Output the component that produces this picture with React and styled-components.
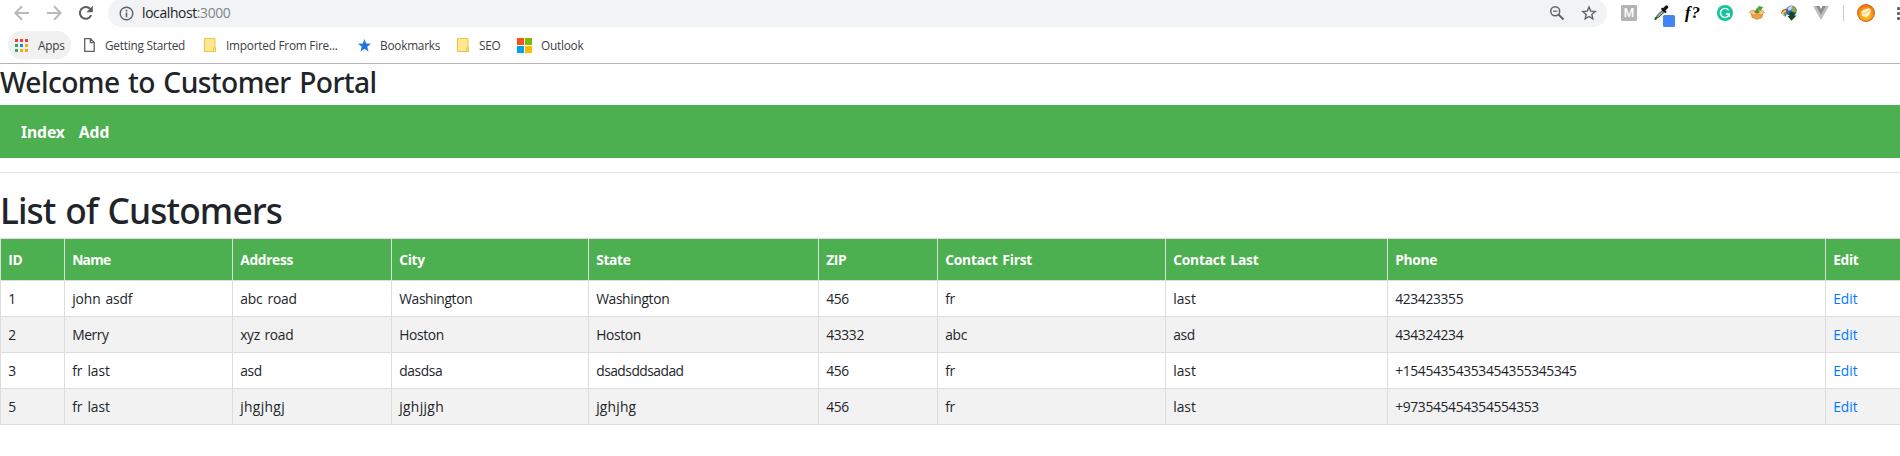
import React from 'react';
import styled, { createGlobalStyle } from 'styled-components';

const UI_FONT = '"Noto Sans", "Open Sans", sans-serif';
const GREEN = '#4caf50';

const GlobalStyle = createGlobalStyle`
  * { box-sizing: border-box; }
  body { margin: 0; background: #fff; overflow: hidden; font-family: ${UI_FONT}; }
  svg { display: block; flex: none; }
`;

const Window = styled.div`
  width: 1900px;
  height: 456px;
  overflow: hidden;
`;

/* Browser chrome */

const Chrome = styled.header`
  height: 64px;
  border-bottom: 1px solid #b6b4b6;
`;

const Toolbar = styled.div`
  height: 26px;
  display: flex;
  align-items: center;
`;

const NavButtons = styled.div`
  display: flex;
  gap: 16px;
  padding: 0 14px;
`;

const Omnibox = styled.div`
  width: 1499px;
  height: 28px;
  flex: none;
  padding: 0 11px;
  display: flex;
  align-items: center;
  border-radius: 14px;
  background: #f1f3f4;
`;

const Url = styled.div`
  flex: 1;
  margin-left: 8px;
  font: 13.8px/20px "Open Sans", sans-serif;
  letter-spacing: -0.33px;
  color: #202124;
`;

const Port = styled.span`
  color: #80868b;
`;

const OmniboxActions = styled.div`
  display: flex;
  gap: 16px;
  margin-right: -1px;
`;

const Extensions = styled.div`
  display: flex;
  flex: none;
  align-items: center;
  gap: 16px;
  margin-left: 14px;
`;

const LetterBadge = styled.div`
  width: 16px;
  height: 16px;
  border-radius: 1px;
  background: #b4b4b4;
  color: #fff;
  font: 500 12px/16px Roboto, sans-serif;
  text-align: center;
`;

const FontFinder = styled.div`
  width: 16px;
  display: flex;
  justify-content: center;
  white-space: nowrap;
  color: #000;
  font: italic bold 17px/20px "Liberation Serif", serif;
  letter-spacing: 0.8px;
`;

const Divider = styled.div`
  width: 1px;
  height: 16px;
  flex: none;
  margin: 0 13px 0 14px;
  background: #c8c8c8;
`;

const Menu = styled.div`
  display: flex;
  flex: none;
  flex-direction: column;
  gap: 2px;
  margin-left: 22px;
`;

const MenuDot = styled.i`
  width: 3px;
  height: 3px;
  border-radius: 1px;
  background: #5f6368;
`;

const BookmarksBar = styled.nav`
  height: 37px;
  padding: 1px 8px 0;
  display: flex;
  align-items: center;
`;

const Bookmark = styled.div`
  height: 28px;
  display: flex;
  align-items: center;
  gap: ${(p) => p.$gap}px;
  width: ${(p) => p.$width}px;
  margin-right: ${(p) => (p.$active ? 6 : 0)}px;
  padding-left: 7px;
  border-radius: 14px;
  background: ${(p) => (p.$active ? '#f1f1f1' : 'transparent')};
  color: #3c4043;
  font: 11.8px/16px "Open Sans", sans-serif;
  letter-spacing: -0.22px;
  white-space: nowrap;
`;

/* Page */

const PageTitle = styled.h2`
  margin: 0;
  height: 41px;
  font: 500 28.2px/37px ${UI_FONT};
  letter-spacing: -0.6px;
  word-spacing: 1.8px;
  color: #212529;
`;

const NavBar = styled.nav`
  height: 53px;
  padding-left: 21px;
  display: flex;
  align-items: center;
  gap: 14px;
  background: ${GREEN};
`;

const NavLink = styled.a`
  color: #fff;
  font: bold 15.7px/22px ${UI_FONT};
  letter-spacing: -0.1px;
`;

const Rule = styled.hr`
  margin: 14px 0 13px;
  border: 0;
  border-top: 1px solid #e6e6e6;
`;

const ListTitle = styled.h1`
  margin: 0;
  height: 52px;
  font: 500 35.3px/48px ${UI_FONT};
  letter-spacing: -0.9px;
  word-spacing: 1.6px;
  color: #212529;
`;

const Table = styled.table`
  width: 1900px;
  table-layout: fixed;
  border-collapse: separate;
  border-spacing: 0;
  border-bottom: 1px solid #ddd;
  font: 13.8px/20px "Open Sans", sans-serif;
  color: #212529;
`;

const Row = styled.tr`
  height: 36px;
  background: ${(p) => (p.$striped ? '#f2f2f2' : '#fff')};
`;

const HeaderRow = styled.tr`
  height: 42px;
  background: ${GREEN};
  color: #fff;
`;

const Cell = styled.td`
  padding: 1px 0 0 7.2px;
  border: solid #ddd;
  border-width: 1px 0 0 1px;
  letter-spacing: ${(p) => p.$tracking ?? -0.33}px;
  word-spacing: 1.5px;
  text-align: left;
  white-space: nowrap;
`;

const EditLink = styled.a`
  color: #007bff;
`;

const Col = styled.col`
  width: ${(p) => p.$width}px;
`;

/* Icons */

const ArrowIcon = ({ forward }) => (
  <svg width="16" height="16" viewBox="0 0 16 16" fill="none" stroke="#bababc" strokeWidth="2">
    <path d={forward ? 'M1 8h13M8 1.3 14.6 8 8 14.7' : 'M15 8H2M8 1.3 1.4 8 8 14.7'} />
  </svg>
);

const ReloadIcon = () => (
  <svg width="16" height="16" viewBox="0 0 16 16">
    <path d="M13.2 10.2A5.9 5.9 0 1 1 12.2 3.9" fill="none" stroke="#5a5d61" strokeWidth="2" />
    <path d="M14.8.8v6.5H8.4z" fill="#5a5d61" />
  </svg>
);

const InfoIcon = () => (
  <svg width="15" height="15" viewBox="0 0 15 15">
    <circle cx="7.5" cy="7.5" r="6.3" fill="none" stroke="#5f6368" strokeWidth="1.4" />
    <path d="M6.7 3.8h1.6v1.6H6.7zM6.7 6.6h1.6v4.7H6.7z" fill="#5f6368" />
  </svg>
);

const ZoomOutIcon = () => (
  <svg width="16" height="16" viewBox="0 0 16 16" fill="none" stroke="#5f6368" strokeWidth="1.5">
    <circle cx="6.2" cy="6.2" r="4.5" />
    <path d="M9.5 9.5l5 5" strokeWidth="2" />
    <path d="M4 6.2h4.4" strokeWidth="1.2" />
  </svg>
);

const StarOutlineIcon = () => (
  <svg width="16" height="16" viewBox="0 0 16 16" fill="none" stroke="#5f6368" strokeWidth="1.4">
    <path d="M8 2l1.7 4.1 4.5.4-3.4 2.9 1 4.4L8 11.5l-3.8 2.3 1-4.4L1.8 6.5l4.5-.4z" />
  </svg>
);

const EyedropperIcon = () => (
  <svg width="16" height="16" viewBox="0 0 16 16" overflow="visible">
    <path d="M3 13.5L4.5 10 10 4.8l1.8 1.8-6 5.6z" fill="#9fb5a3" stroke="#2a4a33" strokeWidth="1" />
    <path d="M2.8 12.2L2.4 15" stroke="#1d6b38" strokeWidth="1.8" />
    <path d="M8.6 3.3l4.4 4.2" stroke="#151515" strokeWidth="2" />
    <path d="M10.6 4.9l3-2.8" stroke="#151515" strokeWidth="3.4" strokeLinecap="round" />
    <rect x="10" y="10" width="12" height="12" rx="1.5" fill="#4285f4" />
  </svg>
);

const GrammarIcon = () => (
  <svg width="16" height="16" viewBox="0 0 16 16">
    <circle cx="8" cy="8" r="8" fill="#15c39a" />
    <path d="M11.6 5.3A4.5 4.5 0 1 0 12.3 9H8.8M12.3 9v2.9" fill="none" stroke="#fff" strokeWidth="1.4" />
  </svg>
);

const BasketIcon = () => (
  <svg width="16" height="16" viewBox="0 0 16 16">
    <path d="M2.2 8L8 6l5.8 2-.9 4.6L8 14.3 3 12.4z" fill="#e9a342" stroke="#b87423" strokeWidth=".6" />
    <path d="M.3 7.2L3 5.2l5 1 5-1 2.7 2-3.7 3-4-1.6-4 1.6z" fill="#f9cd80" stroke="#c07b28" strokeWidth=".6" />
    <path d="M4.5 7L8 5.8 11.5 7 8 8.2z" fill="#a05a18" />
    <path d="M6.8 7.2C6.8 4 8 2.6 10 2.4L9.8 1.2l4 1.3-2.8 3-.3-1.2C9.4 4.5 9 5.500 9.100 7.200z" fill="#41a82d" stroke="#2b7b1d" strokeWidth=".5" />
  </svg>
);

const GlobeIcon = () => (
  <svg width="16" height="16" viewBox="0 0 16 16" fill="none">
    <path d="M9 4.5H5C2 4.5.7 7 .7 8.5" stroke="#e53a2e" strokeWidth="1.3" />
    <path d="M9 5.9H5.5C3 5.9 1.8 7.5 1.8 9.5" stroke="#f6c928" strokeWidth="1.4" />
    <path d="M9 7.3H6C4 7.3 3 8.5 3 10.5" stroke="#3fae49" strokeWidth="1.5" />
    <path d="M10 8.7H6.5C5 8.7 4.3 9.5 4.3 11.5" stroke="#7452b5" strokeWidth="1.3" />
    <circle cx="10.4" cy="5.7" r="5.3" fill="#2f62a8" />
    <path d="M6.5 3.5c1-2 3.5-3 5.5-2l-1.5 3-3 1.5z" fill="#bdd6f2" />
    <path d="M12 1c2 1 3.3 3 3 5.5L12.5 8 10 5z" fill="#9aa83c" />
    <path d="M8.5 7.5c2-1 4-.5 5 0v3h2l-5 5.2L6.5 11h2z" fill="#0f4a1c" />
  </svg>
);

const VueIcon = () => (
  <svg width="16" height="16" viewBox="0 0 16 16">
    <path d="M0 1h6.2L8 4.2 9.8 1H16L8 15z" fill="#bdbdbd" />
    <path d="M3.2 1h3L8 4.2 9.8 1h3L8 9.4z" fill="#8b8b8b" />
  </svg>
);

const AvatarIcon = () => (
  <svg width="18" height="18" viewBox="0 0 18 18">
    <defs>
      <radialGradient id="avatar" cx=".5" cy=".65" r=".6">
        <stop offset="0" stopColor="#ffcb2e" />
        <stop offset=".6" stopColor="#fb9d14" />
        <stop offset="1" stopColor="#ee7712" />
      </radialGradient>
    </defs>
    <circle cx="9" cy="9" r="8.4" fill="url(#avatar)" stroke="#d9691c" strokeWidth="1.2" />
    <path d="M4.5 7.5c2-2.5 5.5-3.5 8.7-3C14.5 7 13 11.2 10 12.5c-2 .5-3.600.2-5-.8z" fill="#fff5cf" />
    <path d="M4.5 9.3c3 .8 5.5-.8 8.5-3.7" fill="none" stroke="#f9b43c" strokeWidth=".8" />
  </svg>
);

const APP_COLORS = ['#ea4335', '#ea4335', '#ea4335', '#34a853', '#1a84f0', '#f9ab00', '#34a853', '#f9ab00', '#f9ab00'];

const AppsIcon = () => (
  <svg width="13" height="13" viewBox="0 0 13 13">
    {APP_COLORS.map((color, i) => (
      <rect key={i} x={(i % 3) * 5} y={Math.floor(i / 3) * 5} width="3" height="3" fill={color} />
    ))}
  </svg>
);

const PageIcon = () => (
  <svg width="11" height="14" viewBox="0 0 11 14" fill="none" stroke="#5f6368" strokeWidth="1.3">
    <path d="M.7.7h5.8l3.7 3.8v8.8H.7zM6.3.7v4h3.9" />
  </svg>
);

const FolderIcon = () => (
  <svg width="12" height="14" viewBox="0 0 12 14">
    <path d="M.5.5h10.5v13H.5z" fill="#ffe694" stroke="#e8c53f" />
    <path d="M9.5 13.5V10h2v3.5z" fill="#ffe694" stroke="#e8c53f" />
  </svg>
);

const StarIcon = () => (
  <svg width="13" height="13" viewBox="0 0 13 13">
    <path d="M6.5 0l1.7 4.5 4.8.2-3.8 3 1.3 4.8-4-2.7-4 2.7 1.3-4.8L0 4.7l4.8-.2z" fill="#1a73e8" />
  </svg>
);

const OutlookIcon = () => (
  <svg width="15" height="15" viewBox="0 0 15 15">
    <path d="M0 0h7v7H0z" fill="#f65314" />
    <path d="M8 0h7v7H8z" fill="#7cbb00" />
    <path d="M0 8h7v7H0z" fill="#00a1f1" />
    <path d="M8 8h7v7H8z" fill="#ffbb00" />
  </svg>
);

const BOOKMARKS = [
  { label: 'Apps', icon: <AppsIcon />, width: 63, gap: 10, active: true },
  { label: 'Getting Started', icon: <PageIcon />, width: 120, gap: 10 },
  { label: 'Imported From Fire...', icon: <FolderIcon />, width: 154, gap: 10 },
  { label: 'Bookmarks', icon: <StarIcon />, width: 99, gap: 9 },
  { label: 'SEO', icon: <FolderIcon />, width: 60, gap: 10 },
  { label: 'Outlook', icon: <OutlookIcon />, width: 90, gap: 9 },
];

const COLUMNS = [
  { label: 'ID', width: 64 },
  { label: 'Name', width: 168, tracking: -0.8 },
  { label: 'Address', width: 159 },
  { label: 'City', width: 197 },
  { label: 'State', width: 230 },
  { label: 'ZIP', width: 119 },
  { label: 'Contact First', width: 228, tracking: -0.22 },
  { label: 'Contact Last', width: 222, tracking: -0.22 },
  { label: 'Phone', width: 438 },
  { label: 'Edit', width: 75 },
];

const CUSTOMERS = [
  ['1', 'john asdf', 'abc road', 'Washington', 'Washington', '456', 'fr', 'last', '423423355'],
  ['2', 'Merry', 'xyz road', 'Hoston', 'Hoston', '43332', 'abc', 'asd', '434324234'],
  ['3', 'fr last', 'asd', 'dasdsa', 'dsadsddsadad', '456', 'fr', 'last', '+15454354353454355345345'],
  ['5', 'fr last', 'jhgjhgj', 'jghjjgh', 'jghjhg', '456', 'fr', 'last', '+973545454354554353'],
];

const TRACKING = {
  'john asdf': -0.1,
  'abc road': -0.15,
  'fr last': -0.05,
  last: 0,
  jhgjhgj: 0.35,
  jghjjgh: 0.35,
  jghjhg: 0.2,
  dsadsddsadad: -0.5,
  dasdsa: -0.4,
  Washington: -0.35,
  Merry: -0.4,
};

export default function App() {
  return (
    <Window>
      <GlobalStyle />
      <Chrome>
        <Toolbar>
          <NavButtons>
            <ArrowIcon />
            <ArrowIcon forward />
            <ReloadIcon />
          </NavButtons>
          <Omnibox>
            <InfoIcon />
            <Url>localhost<Port>:3000</Port></Url>
            <OmniboxActions>
              <ZoomOutIcon />
              <StarOutlineIcon />
            </OmniboxActions>
          </Omnibox>
          <Extensions>
            <LetterBadge>M</LetterBadge>
            <EyedropperIcon />
            <FontFinder>f?</FontFinder>
            <GrammarIcon />
            <BasketIcon />
            <GlobeIcon />
            <VueIcon />
          </Extensions>
          <Divider />
          <AvatarIcon />
          <Menu>
            <MenuDot />
            <MenuDot />
            <MenuDot />
          </Menu>
        </Toolbar>
        <BookmarksBar>
          {BOOKMARKS.map((b) => (
            <Bookmark key={b.label} $width={b.width} $gap={b.gap} $active={b.active}>
              {b.icon}
              {b.label}
            </Bookmark>
          ))}
        </BookmarksBar>
      </Chrome>

      <main>
        <PageTitle>Welcome to Customer Portal</PageTitle>
        <NavBar>
          <NavLink>Index</NavLink>
          <NavLink>Add</NavLink>
        </NavBar>
        <Rule />
        <ListTitle>List of Customers</ListTitle>
        <Table>
          <colgroup>
            {COLUMNS.map((c) => (
              <Col key={c.label} $width={c.width} />
            ))}
          </colgroup>
          <thead>
            <HeaderRow>
              {COLUMNS.map((c) => (
                <Cell as="th" key={c.label} $tracking={c.tracking}>{c.label}</Cell>
              ))}
            </HeaderRow>
          </thead>
          <tbody>
            {CUSTOMERS.map((values, i) => (
              <Row key={values[0]} $striped={i % 2 === 1}>
                {values.map((value, j) => (
                  <Cell key={j} $tracking={TRACKING[value]}>{value}</Cell>
                ))}
                <Cell $tracking={0}>
                  <EditLink>Edit</EditLink>
                </Cell>
              </Row>
            ))}
          </tbody>
        </Table>
      </main>
    </Window>
  );
}
